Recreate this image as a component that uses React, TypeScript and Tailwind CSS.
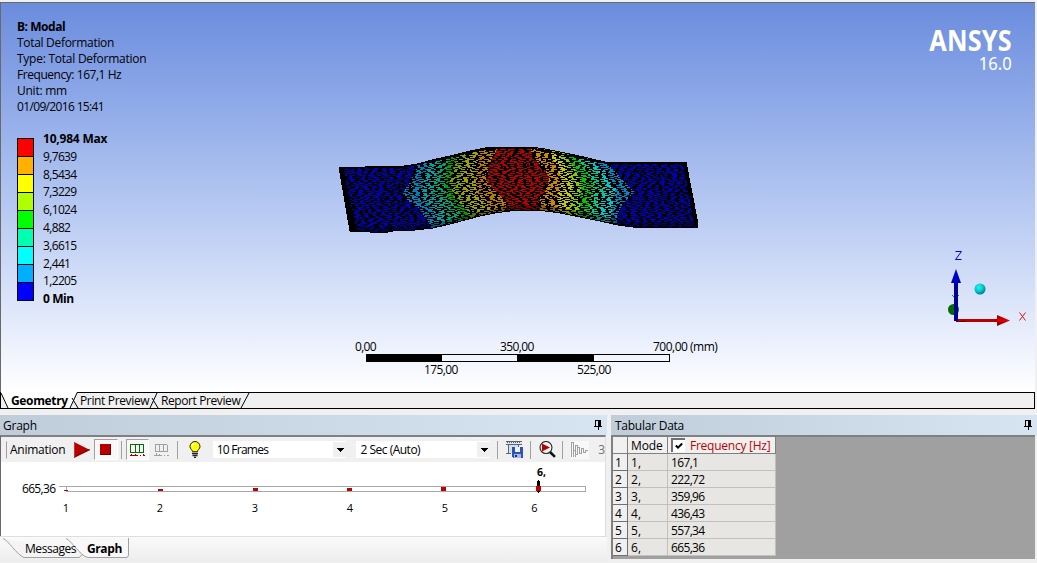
import type { ReactNode } from "react";

const info = [
  { text: "Total Deformation", className: "tracking-[-0.3px]" },
  { text: "Type: Total Deformation", className: "tracking-[-0.25px]" },
  { text: "Frequency: 167,1 Hz", className: "tracking-[-0.45px]" },
  { text: "Unit: mm", className: "tracking-[-0.25px]" },
  { text: "01/09/2016 15:41", className: "tracking-[-0.65px]" },
];

const legend = [
  { color: "#ff0000", label: "9,7639" },
  { color: "#ffb000", label: "8,5434" },
  { color: "#ffff00", label: "7,3229" },
  { color: "#b0ff00", label: "6,1024" },
  { color: "#00ff00", label: "4,882" },
  { color: "#00ffb0", label: "3,6615" },
  { color: "#00ffff", label: "2,441" },
  { color: "#00b0ff", label: "1,2205" },
  { color: "#0000ff", label: "" },
];

const modes = ["167,1", "222,72", "359,96", "436,43", "557,34", "665,36"];

const OUTLINE =
  "339,167 365,167 404,166 418,164 432,160 450,156 470,151 485,148 500,147 531,147 545,149 560,152 575,155 592,159 605,162 686,162 697,219 697,227 672,227 668,228 632,227 618,225 600,221 580,217 560,213 545,211 530,210 510,211 495,213 480,216 465,220 450,224 433,228 415,230 398,230 388,232 370,232 350,231";

// Contour bands, painted left to right; each one covers everything right of its edge.
const bands: [string, string][] = [
  ["#0080b8", "418,140 418,164 411,180 403,193 406,199 420,209 432,229 432,240"],
  ["#009fa5", "429,140 429,160 424,180 421,195 434,212 441,227 441,240"],
  ["#00a078", "440,140 440,157 434,180 432,193 445,212 450,225 450,240"],
  ["#00a000", "450,140 450,155 444,180 447,195 459,212 463,221 463,240"],
  ["#789e00", "458,140 458,153 450,182 454,197 467,211 471,220 471,240"],
  ["#a0a000", "467,140 467,151 460,182 463,197 475,210 479,217 479,240"],
  ["#b87c00", "480,140 480,149 475,180 478,193 490,207 492,215 492,240"],
  ["#b80000", "498,140 498,147 489,165 486,180 496,192 506,202 506,240"],
  ["#c88800", "529,140 530,148 534,159 545,170 549,178 546,190 540,198 541,240"],
  ["#c8c800", "545,140 545,149 555,163 562,180 558,195 557,240"],
  ["#8cc800", "556,140 556,151 565,165 573,184 570,203 566,240"],
  ["#00c800", "563,140 563,152 573,166 581,182 580,203 575,240"],
  ["#00c890", "574,140 574,155 585,168 594,184 590,203 586,240"],
  ["#00c8c8", "582,140 582,157 596,170 606,187 600,203 596,240"],
  ["#0088c4", "592,140 592,159 606,173 616,188 613,203 607,240"],
  ["#0000b8", "604,140 604,160 620,177 634,192 623,204 617,215 618,240"],
];

// Element edges of the finite element mesh, as short runs on each scan line.
function meshPath() {
  let state = 90210;
  const rnd = () => {
    state = (state + 0x6d2b79f5) | 0;
    let t = Math.imul(state ^ (state >>> 15), 1 | state);
    t = (t + Math.imul(t ^ (t >>> 7), 61 | t)) ^ t;
    return ((t ^ (t >>> 14)) >>> 0) / 4294967296;
  };
  let d = "";
  for (let y = 146; y < 234; y++) {
    let x = 338 - Math.floor(rnd() * 9);
    const longRun = y % 2 === 0;
    while (x < 698) {
      const gap = longRun ? 2 + Math.floor(rnd() * 3) : 3 + Math.floor(rnd() * 5);
      const run = longRun ? 4 + Math.floor(rnd() * 8) : 2 + Math.floor(rnd() * 3);
      d += `M${x} ${y}h${run}v1h-${run}z`;
      x += run + gap;
    }
  }
  for (let i = 0; i < 90; i++) {
    const x = 342 + Math.floor(rnd() * 350);
    const y = 148 + Math.floor(rnd() * 82);
    d += `M${x} ${y}h2v3h-2z`;
  }
  return d;
}
const MESH = meshPath();

function Model() {
  return (
    <svg className="absolute left-[337px] top-[142px]" width="363" height="94" viewBox="337 142 363 94" shapeRendering="crispEdges">
      <defs>
        <clipPath id="plate">
          <polygon points={OUTLINE} />
        </clipPath>
      </defs>
      <g clipPath="url(#plate)">
        <rect x="337" y="142" width="363" height="94" fill="#0000b4" />
        {bands.map(([color, edge]) => (
          <polygon key={color} points={`${edge} 720,240 720,140`} fill={color} />
        ))}
        <path d={MESH} fill="#000" />
        <path d="M339 167L343 167L357 232L350 232zM686 162L697 222V227L694 225L683 162z" fill="#000" />
        <path d="M350 229L388 230L415 228L433 226L450 222L465 218L480 214L495 211L510 208L530 207L545 208L560 210L580 214L600 218L618 222L632 225L697 224" stroke="#000" strokeOpacity=".3" strokeWidth="5" fill="none" />
      </g>
      <polygon points={OUTLINE} fill="none" stroke="#000" strokeWidth="1" />
      <path d="M340 168L404 167L432 161L450 157L485 149L531 148L605 163L685 163" stroke="#000" strokeWidth="1.500" fill="none" />
    </svg>
  );
}

function Triad() {
  return (
    <svg className="absolute left-[940px] top-[246px]" width="94" height="84" viewBox="940 246 94 84">
      <defs>
        <radialGradient id="ball" cx=".4" cy=".35" r=".65">
          <stop offset="0" stopColor="#30f0f0" />
          <stop offset=".55" stopColor="#00cccc" />
          <stop offset="1" stopColor="#007c84" />
        </radialGradient>
        <linearGradient id="cone" x1="0" y1="0" x2="1" y2="0">
          <stop offset="0" stopColor="#000090" />
          <stop offset=".5" stopColor="#0000e0" />
          <stop offset="1" stopColor="#000078" />
        </linearGradient>
        <linearGradient id="xcone" x1="0" y1="0" x2="0" y2="1">
          <stop offset="0" stopColor="#900000" />
          <stop offset=".5" stopColor="#e00000" />
          <stop offset="1" stopColor="#700000" />
        </linearGradient>
      </defs>
      <circle cx="953.5" cy="309.5" r="5.5" fill="#006c00" />
      <path d="M952 295l2 2M959 295l-2 2M954 299h4" stroke="#00a000" />
      <rect x="956" y="319" width="42" height="3" fill="#b80000" />
      <path d="M956 321.5h10" stroke="#700000" />
      <path d="M997 315l13 5.5l-13 5.5z" fill="url(#xcone)" />
      <rect x="954" y="281" width="4" height="40" fill="#000098" />
      <path d="M956 269l5 14h-10z" fill="url(#cone)" />
      <circle cx="980" cy="289" r="5.5" fill="url(#ball)" />
      <path d="M955.5 251.5h6l-6 8h6" stroke="#0000ee" fill="none" />
      <path d="M1019.5 312.500l6 8M1025.500 312.500l-6 8" stroke="#e01010" fill="none" />
    </svg>
  );
}

function Scale() {
  return (
    <div className="absolute left-[355px] top-[339px] w-[370px] text-xs leading-4">
      <div className="flex h-4">
        <span className="w-[145px] tracking-[-0.7px]">0,00</span>
        <span className="w-[153px] tracking-[-0.6px]">350,00</span>
        <span className="whitespace-nowrap tracking-[-0.5px]">700,00 (mm)</span>
      </div>
      <div className="ml-[11px] mt-[-1px] flex h-2 w-[304px] border border-black">
        <span className="w-[75px] bg-black" />
        <span className="w-[75px]" />
        <span className="w-[77px] bg-black" />
      </div>
      <div className="flex h-4 pl-[69px]">
        <span className="w-[153px] tracking-[-0.6px]">175,00</span>
        <span className="tracking-[-0.6px]">525,00</span>
      </div>
    </div>
  );
}

function Viewport() {
  return (
    <div className="relative mt-0.5 h-[390px] w-[1035px] border-l border-t border-[#696969] bg-linear-to-b from-[#6b8cde] to-white">
      <div className="flex h-full justify-between">
        <div className="pl-4 pt-4 text-xs leading-4">
          <div className="font-bold tracking-[-0.45px]">B: Modal</div>
          {info.map((line) => (
            <div key={line.text} className={line.className}>{line.text}</div>
          ))}
          <div className="mt-[15px] flex gap-[9px]">
            <div className="mt-2 flex h-[163px] w-[17px] flex-col border border-black">
              {legend.map((l) => (
                <span key={l.color} className="flex-1 border-b border-black last:border-b-0" style={{ backgroundColor: l.color }} />
              ))}
            </div>
            <div className="leading-[17.800px]">
              <div className="font-bold tracking-[-0.2px]">10,984 Max</div>
              {legend.slice(0, 8).map((l) => (
                <div key={l.label} className="tracking-[-0.65px]">{l.label}</div>
              ))}
              <div className="font-bold tracking-[-0.4px]">0 Min</div>
            </div>
          </div>
        </div>
        <div className="flex flex-col items-end pr-[23px] pt-[19px] text-white">
          <div className="origin-right scale-x-[0.87] font-['Noto_Sans'] text-[29px] font-bold leading-[35px] tracking-[0.2px]">ANSYS</div>
          <div className="origin-right scale-x-[0.95] pt-[0px] font-['Noto_Sans'] text-[17.500px] leading-[12px]">16.0</div>
        </div>
      </div>
      <Overlay />
    </div>
  );
}

function Overlay() {
  return (
    <div className="absolute -left-px -top-[3px]">
      <Model />
      <Scale />
      <Triad />
    </div>
  );
}

function SheetTabs() {
  return (
    <div className="relative flex h-[17px] w-[1035px] border border-black bg-[#f0f0f0] text-xs leading-[15px]">
      <svg className="absolute -left-px -top-px" width="252" height="17" viewBox="0 0 252 17">
        <path d="M1 0L8 16H70L77 0z" fill="#fff" />
        <path d="M1 1L8 16M70 16L77 1M72 6L78 16M150 16L157 1M152 6L158 16M241 16L249 1" stroke="#000" fill="none" />
        <path d="M1 .5H76" stroke="#fff" />
      </svg>
      <span className="relative ml-[10px] w-[69px] font-bold tracking-[-0.35px]">Geometry</span>
      <span className="relative w-[81px] whitespace-nowrap tracking-[-0.35px]">Print Preview</span>
      <span className="relative whitespace-nowrap tracking-[-0.4px]">Report Preview</span>
    </div>
  );
}

function Pin() {
  return (
    <svg width="8" height="10" viewBox="0 0 8 10" shapeRendering="crispEdges">
      <path d="M1 0h6v6h1v1H4.500v3h-1V7H0V6h1zM2 1v5h2V1z" fill="#000" fillRule="evenodd" />
    </svg>
  );
}

function TitleBar({ children }: { children: ReactNode }) {
  return (
    <div className="flex h-5 items-center justify-between bg-linear-to-r from-[#bfcddb] to-[#d7e4f2] pl-[3px] pr-[5px] text-xs tracking-[-0.25px]">
      <span className="pt-0.5">{children}</span>
      <Pin />
    </div>
  );
}

function Divider() {
  return <span className="h-[18px] w-px bg-[#a0a0a0]" />;
}

function Combo({ label, className }: { label: string; className: string }) {
  return (
    <div className={`flex h-[17px] items-center justify-between bg-white pl-1 ${className}`}>
      <span className="whitespace-nowrap pt-px">{label}</span>
      <span className="flex h-[15px] w-[13px] items-center justify-center bg-[#f0f0f0]">
        <svg width="8" height="4" viewBox="0 0 8 4" shapeRendering="crispEdges">
          <path d="M0 0h8L4 4z" fill="#000" />
        </svg>
      </span>
    </div>
  );
}

function Toolbar() {
  return (
    <div className="flex h-[25px] items-center bg-[#f0f0f0] pl-[3px] text-xs">
      <span className="h-[18px] w-[3px] border border-l-0 border-[#a0a0a0] border-y-[#f0f0f0]" />
      <span className="ml-[3px] w-[63px] tracking-[-0.25px]">Animation</span>
      <svg width="17" height="16" viewBox="0 0 17 16">
        <path d="M1 0l16 8l-16 7.500z" fill="#b40000" />
        <path d="M1 15.500l16-8" stroke="#700000" fill="none" />
        <path d="M1.500 15V1" stroke="#d83030" />
      </svg>
      <span className="ml-[4px] flex h-[21px] w-[24px] items-center justify-center border border-[#a0a0a0] border-b-white border-r-white bg-[#f8f8f8]">
        <span className="h-[11px] w-[11px] border-b border-r border-[#700000] bg-[#b80000]" />
      </span>
      <span className="ml-[3px] mr-[4px] flex"><Divider /></span>
      <span className="flex h-[21px] w-[23px] items-center justify-center border border-[#a0a0a0] border-b-white border-r-white bg-[#f8f8f8]">
        <svg width="15" height="12" viewBox="0 0 15 12" shapeRendering="crispEdges">
          <path d="M.5 9V.5H14M5.500 0V9M9.500 0V9M13.500 0V9M0 8.500H14" stroke="#007000" fill="none" />
          <path d="M0 11.500h8M10 11.500h1M13 11.500h2M1.500 10v1M5.500 10v1M13.500 10v1" stroke="#a00000" />
        </svg>
      </span>
      <svg className="ml-[5px]" width="15" height="12" viewBox="0 0 15 12" shapeRendering="crispEdges">
        <path d="M1.500 8V.5H13.500V8H1.500M5.500 0V8M9.500 0V8M0 11.500h8M10 11.500h1M13 11.500h2M2.500 9v2M5.500 10v1" stroke="#a0a0a0" fill="none" />
      </svg>
      <span className="ml-[8px] flex"><Divider /></span>
      <svg className="ml-[11px]" width="12" height="17" viewBox="0 0 12 17">
        <path d="M6 .5a5 5 0 0 1 5 5.200c0 2.300-2.500 3-2.500 5h-5c0-2-2.500-2.700-2.500-5A5 5 0 0 1 6 .5z" fill="#ff0" stroke="#202000" />
        <path d="M3 4.500l2-2" stroke="#fff" strokeWidth="1.500" />
        <path d="M3 12.500h6M3.500 14.500h5M5 16.500h2" stroke="#222" strokeWidth="1.300" />
      </svg>
      <Combo label="10 Frames" className="ml-[12px] w-[134px] tracking-[-0.75px]" />
      <Combo label="2 Sec (Auto)" className="ml-[10px] w-[134px] tracking-[-0.5px]" />
      <span className="ml-[7px] flex"><Divider /></span>
      <svg className="ml-[8px]" width="17" height="17" viewBox="0 0 17 17" shapeRendering="crispEdges">
        <path d="M0 0h16v1H0zM0 3h16v1H0z" fill="#59666b" />
        <path d="M0 1h16v2H0z" fill="#dfe9ee" />
        <path d="M1 1.500h14" stroke="#59666b" strokeDasharray="1 1" />
        <path d="M3 4h9v8H3z" fill="#cfe0f0" />
        <path d="M2.500 4v9M12.500 4v3" stroke="#59666b" />
        <path d="M0 12h5v1H0z" fill="#59666b" />
        <path d="M6 6h11v11H7l-1-1z" fill="#2f52b4" />
        <path d="M9 6h5v5H9z" fill="#eef2ff" />
        <path d="M8 13h7v4H8z" fill="#a8b8df" />
        <path d="M9 14h2v2H9z" fill="#142d78" />
      </svg>
      <span className="ml-[7px] flex"><Divider /></span>
      <svg className="ml-[8px]" width="17" height="17" viewBox="0 0 17 17">
        <path d="M11 11l5 5" stroke="#111" strokeWidth="2.500" />
        <circle cx="7" cy="6.500" r="6" fill="#f6f6f6" stroke="#222" strokeWidth="1.100" />
        <path d="M3 2.500l8 4l-8 4z" fill="#b80000" />
      </svg>
      <span className="ml-[6px] flex"><Divider /></span>
      <span className="ml-[7px] flex h-[18px] w-[19px] items-center justify-center bg-[#f8f8f8]">
        <svg width="17" height="16" viewBox="0 0 17 16" shapeRendering="crispEdges">
          <path d="M.5 15V.5H2.500V15M4.500 15V3.500H6.500V12.500H4.500M6.500 5.500H8.500V11.500H10.500V6.500H12.500V10.500H14.500V8.500H17M2 8.500H5" stroke="#a0a0a0" fill="none" />
        </svg>
      </span>
      <span className="ml-[9px] text-[#707070]">3</span>
    </div>
  );
}

const marks = [
  { x: 66.5, w: 4, h: 1, label: "1", lx: 66 },
  { x: 160.500, w: 5, h: 2, label: "2", lx: 160 },
  { x: 255.500, w: 5, h: 3, label: "3", lx: 255 },
  { x: 349.500, w: 5, h: 3, label: "4", lx: 350 },
  { x: 443.500, w: 5, h: 4, label: "5", lx: 445 },
  { x: 538.500, w: 5, h: 5, label: "6", lx: 534.500 },
];

function Timeline() {
  return (
    <svg className="block" width="604" height="74" viewBox="1 462 604 74" fontSize="12">
      <rect x="1" y="462" width="604" height="74" fill="#fff" />
      <g shapeRendering="crispEdges">
        <path d="M59 486.500H586M66 491.500H586M66.500 487v4M585.500 487v5" stroke="#a8a8a8" fill="none" />
        <path d="M537 482l1-2h1l1 2v9l-1 2h-1l-1-2z" fill="#000" />
        {marks.map((m) => (
          <rect key={m.label} x={m.x - 2.500} y={491 - m.h} width={m.w} height={m.h} fill="#c00000" />
        ))}
      </g>
      <text x="22" y="493" textLength="34" lengthAdjust="spacing">665,36</text>
      {marks.map((m) => (
        <text key={m.label} x={m.lx} y="512" textAnchor="middle" fontSize="11">{m.label}</text>
      ))}
      <text x="537" y="476" fontWeight="bold" fontSize="10.500">6,</text>
    </svg>
  );
}

function BottomTabs() {
  return (
    <div className="relative flex h-[26px] border-t border-[#dedede] bg-linear-to-b from-[#fafafa] to-[#ededed] text-xs leading-[23px]">
      <svg className="absolute left-0 top-0" width="132" height="24" viewBox="0 0 132 24">
        <path d="M3 1.500C8 3 17 18 24 20.500H79L83 17" fill="#f4f4f4" stroke="#a0a0a0" />
        <path d="M66 1.500C72 4 80 19 88 20.500H126Q128.500 20.500 128.500 18V1" fill="#f8f8f8" stroke="#a0a0a0" />
      </svg>
      <span className="relative ml-[25px] w-[62px] tracking-[-0.45px]">Messages</span>
      <span className="relative font-bold tracking-[-0.4px]">Graph</span>
    </div>
  );
}

function GraphPanel() {
  return (
    <section className="flex w-[607px] flex-col">
      <TitleBar>Graph</TitleBar>
      <div className="w-[606px] border-l border-t-2 border-[#808080] border-l-[#696969] border-r border-r-[#dedede]">
        <Toolbar />
        <Timeline />
      </div>
      <BottomTabs />
    </section>
  );
}

function TablePanel() {
  return (
    <section className="ml-1 flex flex-1 flex-col">
      <TitleBar><span className="pl-px">Tabular Data</span></TitleBar>
      <div className="h-[124px] w-[424px] border-l-2 border-t-2 border-[#808080] bg-[#a0a0a0] text-xs">
        <div className="grid w-[163px] grid-cols-[15px_40px_108px] leading-[18px]">
          <div className="h-[17px] border-b border-r border-[#808080] bg-[#f0f0f0]" />
          <div className="h-[17px] border-b border-r border-[#808080] bg-[#f0f0f0] pl-[3px] tracking-[-0.1px]">Mode</div>
          <div className="flex h-[17px] items-center gap-[5px] border-b border-r border-[#808080] bg-[#f0f0f0] pl-[3px] text-[#c00000]">
            <span className="flex h-[14px] w-[14px] items-center justify-center border-l-2 border-t-2 border-[#707070] bg-white">
              <svg width="8" height="8" viewBox="0 0 8 8">
                <path d="M.8 3.500l2.200 2.200L7.200 1.500" fill="none" stroke="#000" strokeWidth="2" />
              </svg>
            </span>
            <span className="whitespace-nowrap pt-px tracking-[-0.25px]">Frequency [Hz]</span>
          </div>
          {modes.map((f, i) => (
            <div key={f} className="contents">
              <div className="h-[17px] border-b border-r border-[#707070] bg-[#f0f0f0] pl-0.5">{i + 1}</div>
              <div className="h-[17px] border-b border-r border-[#c0c0c0] bg-[#e8e6e2] pl-[3px]">{i + 1},</div>
              <div className="h-[17px] border-b border-r border-[#c0c0c0] bg-[#e8e6e2] pl-[3px] tracking-[-0.65px]">{f}</div>
            </div>
          ))}
        </div>
      </div>
    </section>
  );
}

export default function App() {
  return (
    <main className="flex h-[563px] w-[1037px] flex-col overflow-hidden bg-[#f0f0f0] font-['Open_Sans','Noto_Sans',sans-serif] text-black">
      <Viewport />
      <SheetTabs />
      <div className="mt-1.5 flex h-[148px] shrink-0">
        <GraphPanel />
        <TablePanel />
      </div>
    </main>
  );
}
